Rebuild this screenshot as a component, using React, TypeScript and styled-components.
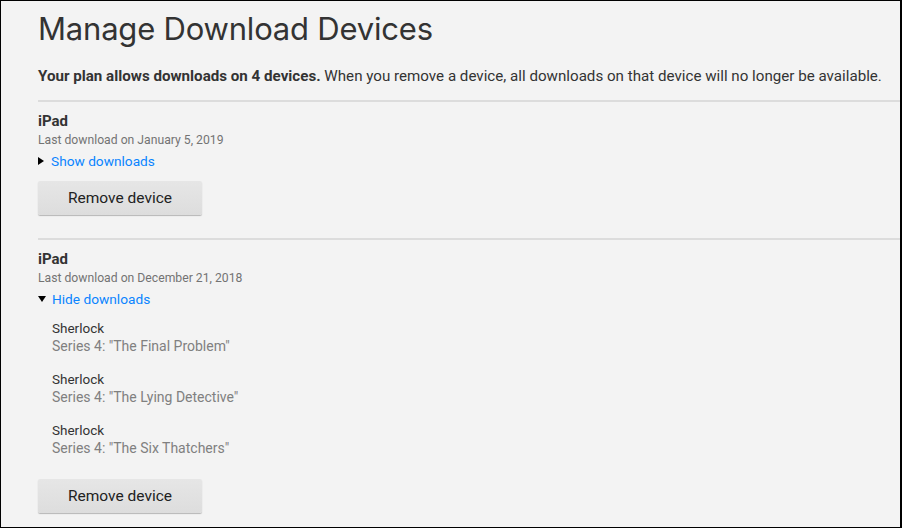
import React from "react";
import { styled, createGlobalStyle } from "styled-components";

const GlobalStyle = createGlobalStyle`
  html, body {
    margin: 0;
    padding: 0;
    background: #f3f3f3;
  }
  body {
    font-family: "Roboto", "Liberation Sans", sans-serif;
    color: #333;
  }
`;

interface Episode {
  show: string;
  title: string;
}

interface Device {
  name: string;
  lastDownload: string;
  expanded: boolean;
  episodes: Episode[];
}

const devices: Device[] = [
  { name: "iPad", lastDownload: "January 5, 2019", expanded: false, episodes: [] },
  {
    name: "iPad",
    lastDownload: "December 21, 2018",
    expanded: true,
    episodes: [
      { show: "Sherlock", title: 'Series 4: "The Final Problem"' },
      { show: "Sherlock", title: 'Series 4: "The Lying Detective"' },
      { show: "Sherlock", title: 'Series 4: "The Six Thatchers"' },
    ],
  },
];

const Frame = styled.div`
  box-sizing: border-box;
  width: 902px;
  height: 528px;
  overflow: hidden;
  border: 1px solid #000;
  border-right-width: 2px;
  background: #f3f3f3;
  padding: 9px 0 0 37px;
`;

const Title = styled.h1`
  margin: 0;
  font-family: "Inter", "Liberation Sans", sans-serif;
  font-size: 31px;
  font-weight: 400;
  line-height: 38px;
  color: #333;
  letter-spacing: -0.2px;
`;

const PlanNote = styled.p`
  margin: 18px 0 0;
  font-size: 15.15px;
  line-height: 20px;
  color: #333;
  white-space: nowrap;

  strong {
    font-weight: 700;
  }
`;

const DeviceBlock = styled.section`
  border-top: 2px solid #dcdcdc;
  margin-top: 14px;
  padding-top: 9px;

  & + & {
    margin-top: 23px;
  }
`;

const DeviceName = styled.h2`
  margin: 0;
  font-size: 15px;
  font-weight: 700;
  line-height: 20px;
  color: #333;
`;

const LastDownload = styled.div`
  font-size: 12.2px;
  line-height: 18px;
  color: #737373;
`;

const Toggle = styled.a`
  display: flex;
  align-items: center;
  gap: 6px;
  margin-top: 3px;
  font-size: 13.7px;
  line-height: 18px;
  color: #0a84ff;
  text-decoration: none;
  cursor: pointer;
`;

const Arrow = styled.span<{ $open: boolean }>`
  display: inline-block;
  width: 0;
  height: 0;
  ${({ $open }) =>
    $open
      ? `border-left: 4.5px solid transparent;
         border-right: 4.5px solid transparent;
         border-top: 6px solid #000;`
      : `border-top: 4.5px solid transparent;
         border-bottom: 4.5px solid transparent;
         border-left: 6px solid #000;
         margin-right: 1px;`}
`;

const EpisodeList = styled.ul`
  list-style: none;
  margin: 11px 0 0;
  padding: 0 0 0 14px;
  display: flex;
  flex-direction: column;
  gap: 15px;
`;

const EpisodeItem = styled.li`
  display: flex;
  flex-direction: column;
`;

const ShowName = styled.span`
  font-size: 13.5px;
  line-height: 18px;
  color: #333;
`;

const EpisodeTitle = styled.span`
  font-size: 14px;
  line-height: 18px;
  color: #808080;
`;

const RemoveButton = styled.button<{ $gap: number }>`
  display: block;
  width: 164px;
  height: 34px;
  margin-top: ${({ $gap }) => $gap}px;
  border: none;
  border-radius: 2px;
  background: linear-gradient(to bottom, #e6e6e6, #dddddd);
  box-shadow: 0 1px 1px rgba(0, 0, 0, 0.25);
  font-family: inherit;
  font-size: 15.5px;
  color: #222;
  cursor: pointer;
`;

const DeviceCard: React.FC<{ device: Device }> = ({ device }) => (
  <DeviceBlock>
    <DeviceName>{device.name}</DeviceName>
    <LastDownload>Last download on {device.lastDownload}</LastDownload>
    <Toggle>
      <Arrow $open={device.expanded} />
      {device.expanded ? "Hide downloads" : "Show downloads"}
    </Toggle>
    {device.expanded && (
      <EpisodeList>
        {device.episodes.map((ep, i) => (
          <EpisodeItem key={i}>
            <ShowName>{ep.show}</ShowName>
            <EpisodeTitle>{ep.title}</EpisodeTitle>
          </EpisodeItem>
        ))}
      </EpisodeList>
    )}
    <RemoveButton $gap={device.expanded ? 22 : 11}>Remove device</RemoveButton>
  </DeviceBlock>
);

export default function App() {
  return (
    <>
      <GlobalStyle />
      <Frame>
        <Title>Manage Download Devices</Title>
        <PlanNote>
          <strong>Your plan allows downloads on 4 devices.</strong> When you remove a device, all
          downloads on that device will no longer be available.
        </PlanNote>
        {devices.map((d, i) => (
          <DeviceCard key={i} device={d} />
        ))}
      </Frame>
    </>
  );
}
